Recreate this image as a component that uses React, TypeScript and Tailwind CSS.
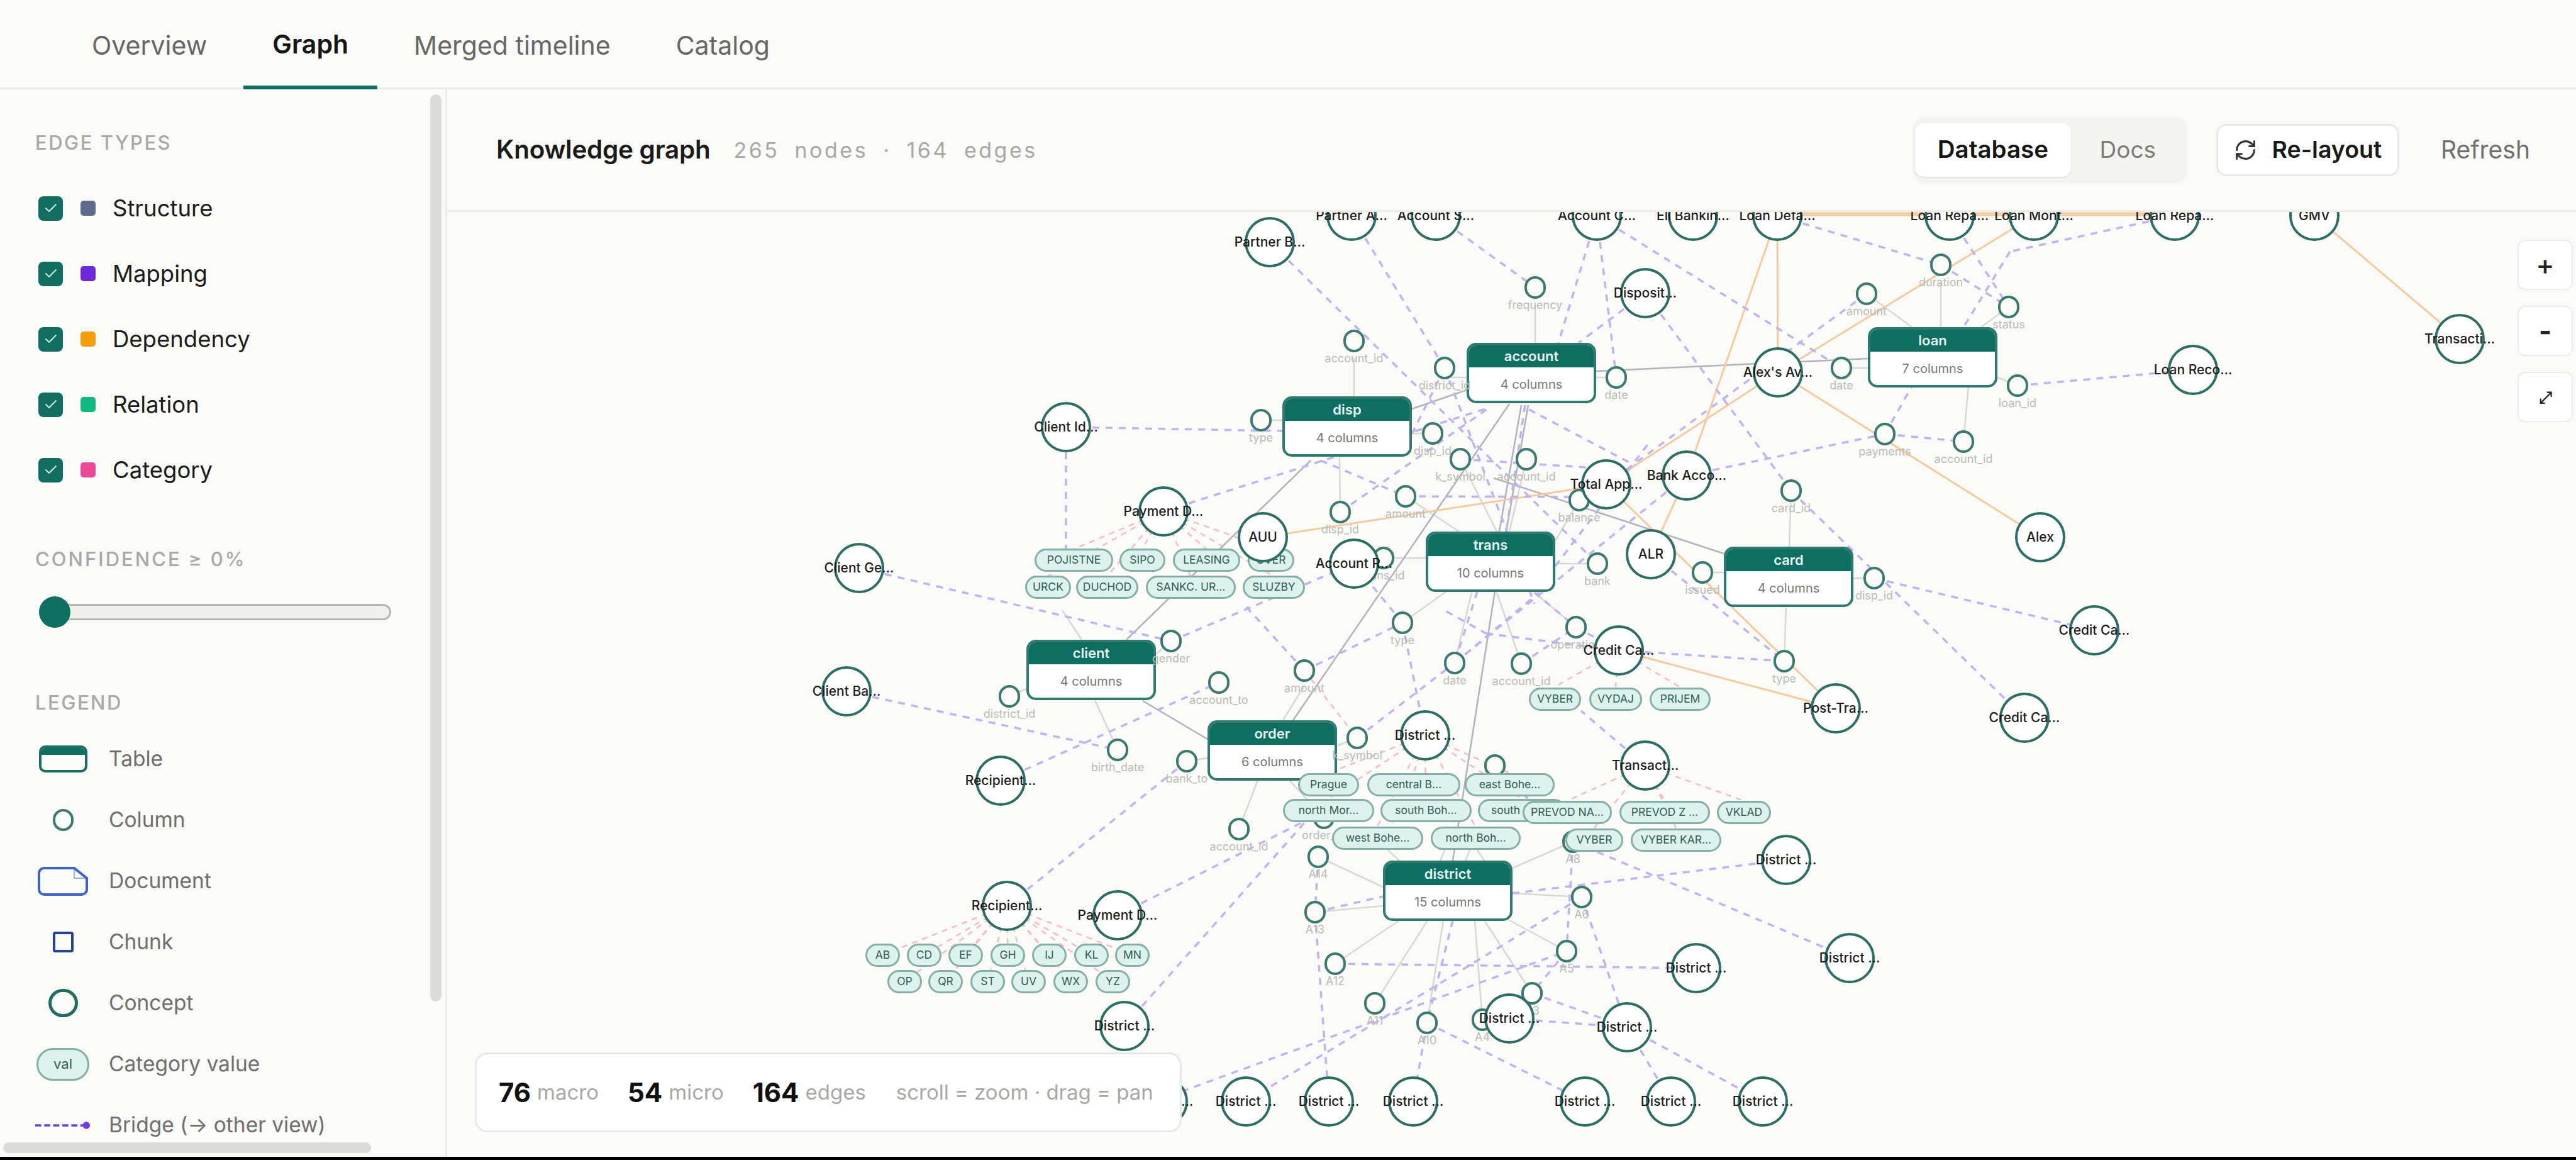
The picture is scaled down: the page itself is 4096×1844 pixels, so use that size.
import { Check, RefreshCw } from "lucide-react";

type Concept = [string, number, number];
type Col = [string, number, number];
type Pill = [string, number, number, number];
type Table = [string, string, number, number];

// page coords of the top-left of the graph canvas
const ox = 711;
const oy = 337;

const edgeTypes = [
  { label: "Structure", color: "bg-[#5f6b8a]" },
  { label: "Mapping", color: "bg-[#6d28d9]" },
  { label: "Dependency", color: "bg-[#f59e0b]" },
  { label: "Relation", color: "bg-[#10b981]" },
  { label: "Category", color: "bg-[#ec4899]" },
];

const concepts: Concept[] = [
  ["Partner B…", 2019, 385],
  ["Partner A…", 2149, 343],
  ["Account S…", 2283, 343],
  ["Account C…", 2539, 343],
  ["Eli Bankin…", 2692, 343],
  ["Loan Defa…", 2826, 343],
  ["Loan Repa…", 3100, 343],
  ["Loan Mont…", 3234, 343],
  ["Loan Repa…", 3458, 343],
  ["GMV", 3680, 343],
  ["Transacti…", 3911, 539],
  ["Loan Reco…", 3487, 588],
  ["Disposit…", 2616, 466],
  ["Alex's Av…", 2827, 592],
  ["Client Id…", 1695, 679],
  ["Payment D…", 1850, 813],
  ["AUU", 2008, 854],
  ["Client Ge…", 1366, 903],
  ["Account R…", 2153, 896],
  ["Total App…", 2554, 770],
  ["Bank Acco…", 2682, 756],
  ["ALR", 2625, 881],
  ["Alex", 3244, 854],
  ["Client Ba…", 1346, 1099],
  ["Recipient…", 1591, 1241],
  ["Recipient…", 1601, 1440],
  ["Payment D…", 1777, 1455],
  ["District …", 2266, 1169],
  ["Credit Ca…", 2574, 1034],
  ["Credit Ca…", 3330, 1002],
  ["Credit Ca…", 3219, 1141],
  ["Post-Tra…", 2919, 1126],
  ["Transact…", 2616, 1217],
  ["District …", 2840, 1367],
  ["District …", 2941, 1523],
  ["District …", 1788, 1631],
  ["District …", 2697, 1539],
  ["District …", 2400, 1619],
  ["District …", 2587, 1633],
  ["District …", 1849, 1751],
  ["District …", 1981, 1751],
  ["District …", 2113, 1751],
  ["District …", 2247, 1751],
  ["District …", 2520, 1751],
  ["District …", 2657, 1751],
  ["District …", 2803, 1751],
];

const columns: Col[] = [
  ["frequency", 2441, 457],
  ["account_id", 2153, 542],
  ["district_id", 2297, 585],
  ["date", 2570, 600],
  ["date", 2928, 585],
  ["amount", 2968, 467],
  ["type", 2005, 668],
  ["disp_id", 2278, 689],
  ["k_symbol", 2322, 730],
  ["account_id", 2427, 730],
  ["amount", 2235, 789],
  ["disp_id", 2131, 814],
  ["balance", 2511, 795],
  ["payments", 2997, 690],
  ["card_id", 2848, 780],
  ["trans_id", 2200, 887],
  ["bank", 2540, 896],
  ["issued", 2707, 910],
  ["disp_id", 2980, 919],
  ["status", 3194, 488],
  ["duration", 3086, 421],
  ["loan_id", 3208, 613],
  ["account_id", 3122, 702],
  ["gender", 1862, 1019],
  ["district_id", 1605, 1107],
  ["account_to", 1938, 1085],
  ["birth_date", 1777, 1192],
  ["bank_to", 1887, 1210],
  ["account_id", 1970, 1318],
  ["amount", 2074, 1066],
  ["k_symbol", 2158, 1173],
  ["type", 2230, 990],
  ["operation", 2506, 997],
  ["date", 2313, 1054],
  ["account_id", 2419, 1055],
  ["type", 2837, 1051],
  ["order_id", 2105, 1300],
  ["trans_id", 2377, 1217],
  ["A14", 2096, 1362],
  ["A13", 2091, 1450],
  ["A12", 2123, 1532],
  ["A11", 2186, 1595],
  ["A10", 2269, 1626],
  ["A4", 2357, 1621],
  ["A3", 2436, 1579],
  ["A5", 2491, 1512],
  ["A6", 2515, 1426],
  ["A8", 2501, 1338],
];

const pills: Pill[] = [
  ["POJISTNE", 1645, 1770, 890],
  ["SIPO", 1780, 1853, 890],
  ["LEASING", 1865, 1972, 890],
  ["UVER", 1984, 2058, 890],
  ["URCK", 1630, 1703, 933],
  ["DUCHOD", 1711, 1810, 933],
  ["SANKC. UR…", 1822, 1965, 933],
  ["SLUZBY", 1976, 2075, 933],
  ["VYBER", 2431, 2514, 1111],
  ["VYDAJ", 2527, 2611, 1111],
  ["PRIJEM", 2623, 2720, 1111],
  ["Prague", 2064, 2161, 1247],
  ["central B…", 2174, 2322, 1247],
  ["east Bohe…", 2329, 2472, 1247],
  ["north Mor…", 2040, 2185, 1288],
  ["south Boh…", 2195, 2340, 1288],
  ["south Mor…", 2350, 2490, 1288],
  ["PREVOD NA…", 2421, 2563, 1291],
  ["PREVOD Z …", 2575, 2719, 1291],
  ["VKLAD", 2730, 2816, 1291],
  ["west Bohe…", 2118, 2263, 1332],
  ["north Boh…", 2275, 2418, 1332],
  ["VYBER", 2489, 2581, 1335],
  ["VYBER KAR…", 2593, 2737, 1335],
];

const smallPills: Pill[] = [
  ["AB", 1376, 1431, 1518],
  ["CD", 1442, 1497, 1518],
  ["EF", 1508, 1563, 1518],
  ["GH", 1575, 1630, 1518],
  ["IJ", 1641, 1696, 1518],
  ["KL", 1708, 1763, 1518],
  ["MN", 1773, 1828, 1518],
  ["OP", 1411, 1466, 1560],
  ["QR", 1476, 1531, 1560],
  ["ST", 1543, 1598, 1560],
  ["UV", 1608, 1663, 1560],
  ["WX", 1675, 1730, 1560],
  ["YZ", 1742, 1797, 1560],
];

const tables: Table[] = [
  ["account", "4 columns", 2332, 545],
  ["disp", "4 columns", 2039, 630],
  ["loan", "7 columns", 2970, 520],
  ["trans", "10 columns", 2267, 845],
  ["card", "4 columns", 2741, 869],
  ["client", "4 columns", 1632, 1017],
  ["order", "6 columns", 1920, 1145],
  ["district", "15 columns", 2199, 1368],
];

// x1, y1, x2, y2 in page coords
const mapping: number[][] = [
  [2019, 385, 2540, 896],
  [2149, 343, 2297, 585],
  [2297, 585, 2440, 960],
  [2283, 343, 2441, 457],
  [2539, 343, 2478, 545],
  [2539, 343, 2570, 600],
  [2539, 343, 2928, 585],
  [2616, 466, 2510, 545],
  [2616, 466, 2848, 780],
  [2848, 780, 3219, 1141],
  [2826, 343, 3086, 421],
  [2968, 467, 2554, 770],
  [3458, 343, 3196, 400],
  [3196, 400, 3122, 520],
  [3100, 343, 3194, 488],
  [3086, 421, 3194, 488],
  [2997, 690, 3040, 614],
  [2682, 756, 2997, 690],
  [2997, 690, 3122, 702],
  [3208, 613, 3487, 588],
  [2682, 756, 2313, 1054],
  [1695, 679, 2039, 685],
  [1695, 719, 1695, 873],
  [1850, 813, 2368, 648],
  [1366, 903, 1862, 1019],
  [1346, 1099, 1777, 1192],
  [1591, 1241, 1938, 1085],
  [1601, 1440, 1887, 1210],
  [1777, 1455, 2105, 1290],
  [1788, 1631, 2090, 1290],
  [1862, 1019, 2153, 896],
  [2074, 1066, 1982, 965],
  [2074, 1066, 2230, 990],
  [2158, 1173, 2313, 1054],
  [2230, 990, 2153, 896],
  [2230, 990, 2266, 1169],
  [2431, 651, 2600, 740],
  [2100, 732, 2235, 789],
  [2235, 789, 2511, 790],
  [2322, 730, 2554, 745],
  [2131, 814, 2368, 648],
  [2245, 690, 2297, 585],
  [2425, 644, 2395, 845],
  [2349, 940, 2313, 1054],
  [2440, 942, 2506, 997],
  [2473, 900, 2625, 700],
  [2625, 881, 2837, 1051],
  [2506, 997, 2574, 1034],
  [2300, 972, 2363, 1007],
  [2363, 1007, 2574, 1034],
  [2313, 1054, 2447, 942],
  [2419, 1055, 2506, 997],
  [2616, 1217, 2514, 1130],
  [2574, 1034, 2837, 1051],
  [2980, 919, 3330, 1002],
  [2091, 1450, 2199, 1425],
  [2123, 1532, 2697, 1539],
  [2405, 1420, 2840, 1367],
  [2400, 1619, 2587, 1633],
  [2091, 1450, 2113, 1751],
  [2096, 1362, 2091, 1450],
  [2269, 1626, 2247, 1751],
  [2269, 1626, 2520, 1751],
  [1879, 1735, 2491, 1512],
  [2515, 1426, 1981, 1751],
  [2501, 1338, 2941, 1523],
  [2515, 1426, 2587, 1633],
  [2587, 1633, 2657, 1751],
  [2587, 1633, 2803, 1751],
  [2436, 1579, 2587, 1633],
  [2501, 1338, 2491, 1512],
  [2491, 1512, 2436, 1579],
  [2310, 1463, 2269, 1626],
  [2377, 1217, 2450, 1290],
];

const dependency: number[][] = [
  [2826, 339, 3458, 339],
  [2826, 342, 3458, 342],
  [2826, 343, 2827, 592],
  [2826, 343, 2682, 756],
  [2827, 592, 2554, 770],
  [2827, 592, 3244, 854],
  [2827, 592, 3234, 343],
  [3680, 343, 3911, 539],
  [2554, 770, 2008, 854],
  [2682, 756, 2625, 881],
  [2554, 770, 2919, 1126],
  [2574, 1034, 2919, 1126],
];

const structure: number[][] = [
  [2538, 590, 2970, 570],
  [2245, 650, 2332, 620],
  [2400, 642, 2056, 1145],
  [2419, 644, 2384, 845],
  [2430, 644, 2395, 845],
  [2377, 940, 2310, 1368],
  [2084, 732, 1791, 1017],
  [1817, 1114, 1920, 1175],
  [2375, 760, 2741, 880],
];

const relation: number[][] = [
  [2441, 485, 2441, 545],
  [2153, 569, 2153, 630],
  [2297, 600, 2332, 600],
  [2538, 600, 2570, 600],
  [2928, 585, 2970, 585],
  [2968, 467, 3040, 520],
  [3086, 450, 3086, 520],
  [3194, 488, 3150, 520],
  [3176, 600, 3208, 613],
  [3130, 614, 3122, 702],
  [2005, 668, 2039, 668],
  [2278, 689, 2245, 689],
  [2322, 730, 2380, 845],
  [2427, 730, 2400, 845],
  [2235, 789, 2320, 845],
  [2131, 814, 2130, 727],
  [2511, 795, 2473, 860],
  [2200, 887, 2267, 887],
  [2540, 896, 2473, 896],
  [2707, 910, 2741, 910],
  [2980, 919, 2945, 919],
  [2848, 780, 2845, 869],
  [2837, 1051, 2840, 963],
  [1862, 1019, 1838, 1040],
  [1605, 1107, 1632, 1095],
  [1777, 1192, 1740, 1111],
  [1689, 970, 1720, 1017],
  [1887, 1210, 1920, 1205],
  [1970, 1318, 2000, 1240],
  [2074, 1090, 2040, 1145],
  [2158, 1173, 2127, 1185],
  [2230, 990, 2300, 940],
  [2313, 1054, 2340, 942],
  [2419, 1055, 2380, 942],
  [2506, 997, 2440, 942],
  [2105, 1300, 2050, 1240],
  [2096, 1362, 2199, 1410],
  [2091, 1450, 2199, 1440],
  [2123, 1532, 2225, 1463],
  [2186, 1595, 2270, 1463],
  [2269, 1626, 2295, 1463],
  [2357, 1621, 2345, 1463],
  [2491, 1512, 2400, 1463],
  [2515, 1426, 2405, 1420],
  [2501, 1338, 2405, 1380],
  [2436, 1579, 2360, 1463],
  [2225, 1368, 2200, 1345],
  [2290, 1368, 2300, 1345],
  [2330, 1368, 2340, 1345],
  [2360, 1368, 2345, 1345],
];

const pinkFans: [number, number, number[]][] = [
  [1850, 813, [1707, 1816, 1918, 2020, 1666, 1760, 1893, 2025]],
  [2574, 1034, [2472, 2569, 2671]],
  [2616, 1217, [2492, 2647, 2773, 2535, 2665]],
  [2266, 1169, [2112, 2248, 2400, 2112, 2267, 2420, 2190, 2346]],
];

const pink: number[][] = [
  ...pinkFans.flatMap(([x, y, ends], f) =>
    ends.map((e, i) => {
      const tops = [[873, 873, 873, 873, 916, 916, 916, 916], [1092, 1092, 1092], [1273, 1273, 1273, 1316, 1316], [1229, 1229, 1229, 1270, 1270, 1270, 1314, 1314]];
      return [x, y, e, tops[f][i]];
    })
  ),
  ...smallPills.map(([, l, r, cy]) => [1601, 1440, (l + r) / 2, cy]),
  [2074, 1066, 2158, 1173],
];

function Edges({ lines, className }: { lines: number[][]; className: string }) {
  return (
    <g className={className} fill="none">
      {lines.map(([a, b, c, d], i) => (
        <line key={i} x1={a} y1={b} x2={c} y2={d} />
      ))}
    </g>
  );
}

function LegendRow({ label, children }: { label: string; children: React.ReactNode }) {
  return (
    <div className="flex h-[97px] items-center">
      <div className="flex w-[88px] items-center justify-center">{children}</div>
      <span className="ml-[29px] whitespace-nowrap text-[33.5px] text-[#6f6f6b]">{label}</span>
    </div>
  );
}

function Graph() {
  return (
    <div className="relative min-h-0 flex-1 overflow-hidden bg-[#fafaf8]">
      <svg className="absolute inset-0 h-full w-full" viewBox={`${ox} ${oy} 3385 1496`} preserveAspectRatio="xMinYMin meet">
        <Edges lines={relation} className="stroke-[#d8d8d3] stroke-[2.5]" />
        <Edges lines={pink} className="stroke-[#f2bccd] stroke-[2.5] [stroke-dasharray:9_8]" />
        <Edges lines={structure} className="stroke-[#b2b2ba] stroke-[2.5]" />
        <Edges lines={dependency} className="stroke-[#f3cb9c] stroke-[3]" />
        <Edges lines={mapping} className="stroke-[#c3b2ec] stroke-[3.5] [stroke-dasharray:11_10]" />
      </svg>

      {tables.map(([name, cols, x, y]) => (
        <div
          key={name}
          className="absolute flex h-[96px] w-[206px] flex-col overflow-hidden rounded-[15px] border-[4px] border-[#2f7a6e] bg-white"
          style={{ left: x - ox, top: y - oy }}
        >
          <div className="flex h-[35px] shrink-0 items-center justify-center bg-[#0f6e62] text-[22px] font-semibold text-[#e6f7f3]">{name}</div>
          <div className="flex flex-1 items-center justify-center text-[20px] text-[#77776f]">{cols}</div>
        </div>
      ))}

      {columns.map(([label, x, y], i) => (
        <div key={i} className="absolute" style={{ left: x - ox, top: y - oy }}>
          <div className="absolute left-[-17px] top-[-18px] h-[36px] w-[34px] rounded-full border-[4px] border-[#3b7a70] bg-[#fafaf8]" />
          <div className="absolute left-[-60px] top-[18px] w-[120px] text-center text-[18px] leading-[20px] text-[#bbbbb6]">{label}</div>
        </div>
      ))}

      {[...pills, ...smallPills].map(([label, l, r, cy], i) => (
        <div
          key={i}
          className="absolute flex h-[37px] items-center justify-center rounded-full border-[3px] border-[#85aea6] bg-[#dcf2ec] text-[17.5px] whitespace-nowrap text-[#2f5c55]"
          style={{ left: l - ox, top: cy - oy - 18, width: r - l }}
        >
          {label}
        </div>
      ))}

      {concepts.map(([label, x, y], i) => (
        <div key={i} className="absolute" style={{ left: x - ox, top: y - oy }}>
          <div className="absolute left-[-40px] top-[-40px] h-[80px] w-[80px] rounded-full border-[4px] border-[#2c6e63] bg-white" />
          <div className="absolute left-[-80px] top-[-14px] w-[160px] text-center text-[21px] leading-[28px] font-medium whitespace-nowrap text-[#1c1c1a]">{label}</div>
        </div>
      ))}

      <div className="absolute top-[44px] right-[5px] flex flex-col gap-[25px]">
        <button className="flex h-[80px] w-[88px] items-center justify-center rounded-[12px] border-[2px] border-[#ecece8] bg-white text-[44px] font-medium text-[#222]">+</button>
        <button className="flex h-[80px] w-[88px] items-center justify-center rounded-[12px] border-[2px] border-[#ecece8] bg-white text-[44px] font-bold text-[#222]">-</button>
        <button className="flex h-[80px] w-[88px] items-center justify-center rounded-[12px] border-[2px] border-[#ecece8] bg-white text-[26px] font-bold text-[#222]">⤢</button>
      </div>

      <div className="absolute top-[1336px] left-[44px] flex h-[127px] w-[1124px] items-center rounded-[20px] border-[3px] border-[#e8e8e4] bg-white pl-[35px] whitespace-nowrap">
        <span className="text-[42px] font-bold text-[#111]">76</span>
        <span className="ml-[10px] text-[33px] text-[#a8a8a3]">macro</span>
        <span className="ml-[46px] text-[42px] font-bold text-[#111]">54</span>
        <span className="ml-[10px] text-[33px] text-[#a8a8a3]">micro</span>
        <span className="ml-[46px] text-[42px] font-bold text-[#111]">164</span>
        <span className="ml-[10px] text-[33px] text-[#a8a8a3]">edges</span>
        <span className="ml-[48px] text-[33px] text-[#a8a8a3]">scroll = zoom · drag = pan</span>
      </div>
    </div>
  );
}

export default function App() {
  return (
    <div className="flex h-[1844px] w-[4096px] flex-col overflow-hidden bg-[#fafaf8] font-['Inter',sans-serif] text-[#111]">
      <div className="flex h-[142px] shrink-0 items-end gap-[12px] border-b-[3px] border-[#ebebe7] pl-[100px]">
        {["Overview", "Graph", "Merged timeline", "Catalog"].map((t) => (
          <div
            key={t}
            className={
              t === "Graph"
                ? "-mb-[3px] flex h-[142px] items-center border-b-[6px] border-[#0f6e62] px-[46px] pt-[6px] text-[41px] font-semibold text-[#161616]"
                : "flex h-[139px] items-center px-[46px] pt-[6px] text-[41px] text-[#666662]"
            }
          >
            {t}
          </div>
        ))}
      </div>

      <div className="flex min-h-0 flex-1">
        <aside className="relative w-[711px] shrink-0 overflow-hidden border-r-[3px] border-[#ebebe7] pt-[70px] pl-[56px]">
          <div className="mb-[37px] h-[30px] text-[31px] leading-[30px] font-medium tracking-[2.5px] text-[#a9a9a4]">EDGE TYPES</div>
          {edgeTypes.map((e) => (
            <div key={e.label} className="flex h-[104px] items-center pl-[5px]">
              <div className="flex h-[39px] w-[39px] items-center justify-center rounded-[8px] bg-[#126e63]">
                <Check size={24} className="text-[#cfe9e3]" strokeWidth={2} />
              </div>
              <div className={`ml-[28px] h-[24px] w-[24px] rounded-[5px] ${e.color}`} />
              <span className="ml-[27px] text-[36.5px] text-[#1b1b1a]">{e.label}</span>
            </div>
          ))}

          <div className="mt-[75px] h-[30px] text-[31px] leading-[30px] font-medium tracking-[3px] text-[#a9a9a4]">CONFIDENCE ≥ 0%</div>
          <div className="relative mt-[44px] ml-[6px] flex h-[50px] w-[560px] items-center">
            <div className="h-[26px] w-full rounded-full border-[3px] border-[#b8b8b3] bg-[#f0f0ed]" />
            <div className="absolute top-0 left-0 h-[50px] w-[50px] rounded-full bg-[#0f6e62]" />
          </div>

          <div className="mt-[104px] h-[30px] text-[31px] leading-[30px] font-medium tracking-[2.5px] text-[#a9a9a4]">LEGEND</div>
          <div className="mt-[26px]">
            <LegendRow label="Table">
              <div className="h-[43px] w-[77px] overflow-hidden rounded-[10px] border-[4px] border-[#1b6e62] bg-[#fafaf8]">
                <div className="h-[11px] bg-[#0f6e62]" />
              </div>
            </LegendRow>
            <LegendRow label="Column">
              <div className="h-[35px] w-[33px] rounded-full border-[4px] border-[#3b7a70]" />
            </LegendRow>
            <LegendRow label="Document">
              <svg width="80" height="46" viewBox="0 0 80 46" fill="none" stroke="#3f63c9" strokeWidth="4">
                <path d="M10 2H58L78 18V36a8 8 0 0 1-8 8H10a8 8 0 0 1-8-8V10a8 8 0 0 1 8-8Z" />
                <path d="M58 2V18H78" strokeWidth="2" opacity="0.5" />
              </svg>
            </LegendRow>
            <LegendRow label="Chunk">
              <div className="h-[33px] w-[33px] rounded-[4px] border-[4px] border-[#27409b]" />
            </LegendRow>
            <LegendRow label="Concept">
              <div className="h-[45px] w-[47px] rounded-full border-[5px] border-[#1f6e62]" />
            </LegendRow>
            <LegendRow label="Category value">
              <div className="flex h-[52px] w-[84px] items-center justify-center rounded-full border-[3px] border-[#85aea6] bg-[#dcf2ec] text-[22px] text-[#2f5c55]">val</div>
            </LegendRow>
            <LegendRow label="Bridge (→ other view)">
              <svg width="92" height="14" viewBox="0 0 92 14">
                <line x1="0" y1="7" x2="84" y2="7" stroke="#6d3fd9" strokeWidth="3.5" strokeDasharray="10 5" />
                <circle cx="85" cy="7" r="6" fill="#6d3fd9" />
              </svg>
            </LegendRow>
          </div>

          <div className="absolute top-[8px] left-[684px] h-[1442px] w-[18px] rounded-full bg-[#dbdbd7]" />
          <div className="absolute bottom-[6px] left-[5px] h-[17px] w-[585px] rounded-full bg-[#dbdbd7]" />
        </aside>

        <main className="flex min-w-0 flex-1 flex-col">
          <div className="flex h-[195px] shrink-0 items-center border-b-[3px] border-[#ebebe7] pr-[73px] pl-[78px]">
            <span className="text-[40.5px] font-semibold tracking-[-0.3px] text-[#1a1a19]">Knowledge graph</span>
            <span className="ml-[37px] text-[34px] tracking-[3.5px] text-[#a9a9a4] [word-spacing:11px]">265 nodes · 164 edges</span>
            <div className="ml-auto flex h-[105px] w-[437px] items-center rounded-[20px] bg-[#f3f3f0] p-[4px]">
              <div className="flex h-[85px] w-[248px] items-center justify-center rounded-[14px] bg-white text-[38.5px] font-semibold text-[#161616] shadow-sm">Database</div>
              <div className="flex flex-1 items-center justify-center text-[37px] text-[#7d7d78]">Docs</div>
            </div>
            <button className="ml-[46px] flex h-[83px] w-[291px] items-center justify-center gap-[24px] rounded-[16px] border-[3px] border-[#e8e8e4] bg-white text-[37.5px] font-semibold text-[#1a1a19]">
              <RefreshCw size={37} strokeWidth={2} className="text-[#333]" />
              Re-layout
            </button>
            <span className="ml-[66px] text-[39px] text-[#70706b]">Refresh</span>
          </div>
          <Graph />
          <div className="h-[6px] shrink-0 bg-white" />
        </main>
      </div>
      <div className="h-[5px] shrink-0 bg-black" />
    </div>
  );
}
